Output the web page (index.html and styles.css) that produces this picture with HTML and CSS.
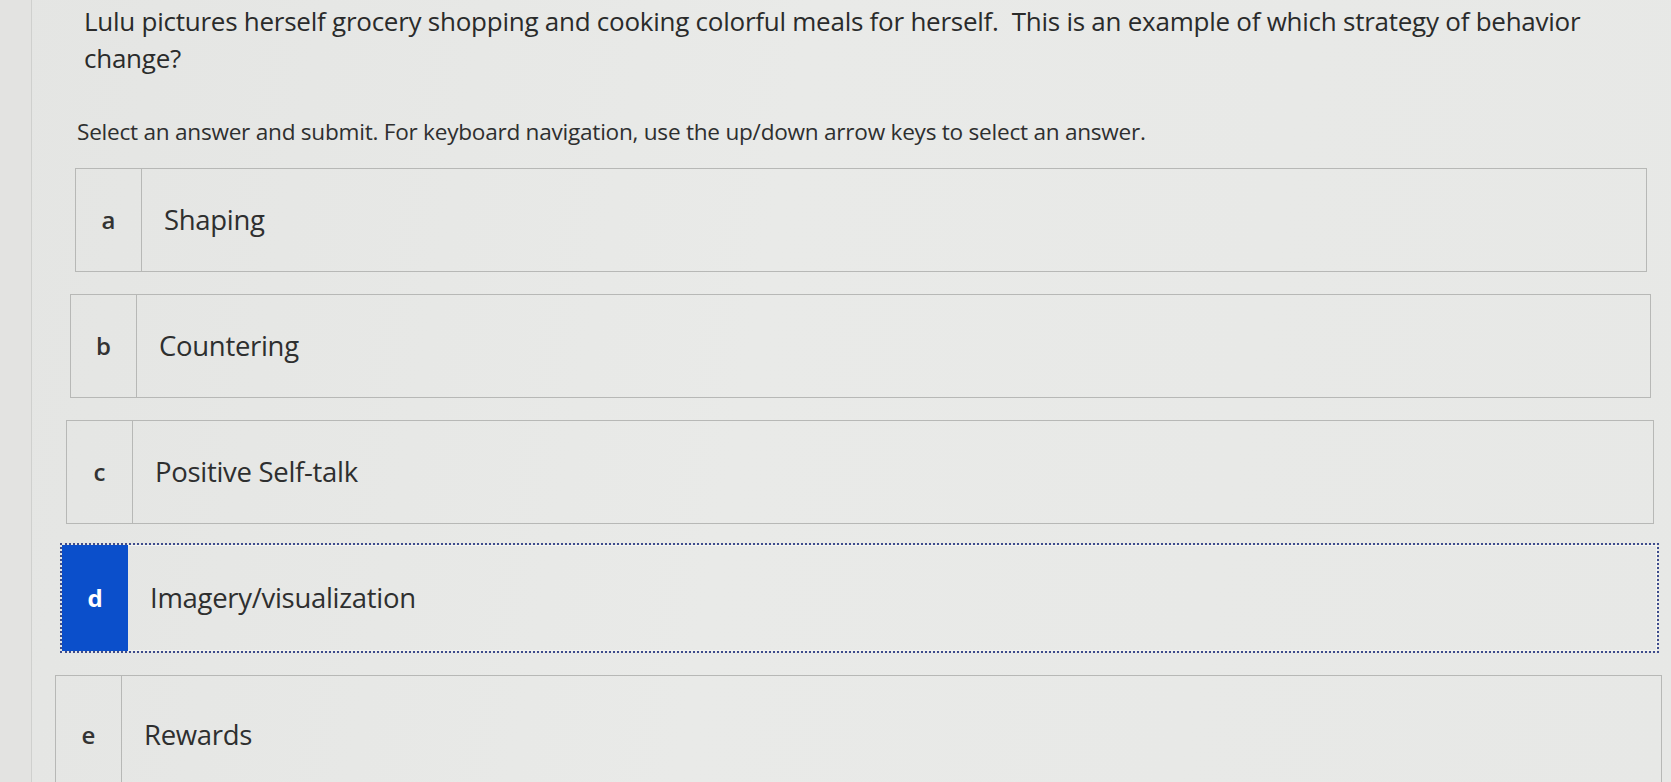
FILE: index.html
```html
<!DOCTYPE html>
<html lang="en">
<head>
<meta charset="utf-8">
<title>Question</title>
<link rel="stylesheet" href="styles.css">
</head>
<body>
<div class="page">
  <div class="edge"></div>
  <main class="main">
    <h1 class="question">Lulu pictures herself grocery shopping and cooking colorful meals for herself.&nbsp; This is an example of which strategy of behavior change?</h1>
    <p class="instructions">Select an answer and submit. For keyboard navigation, use the up/down arrow keys to select an answer.</p>
    <ul class="options">
      <li class="option"><span class="letter">a</span><span class="text">Shaping</span></li>
      <li class="option"><span class="letter">b</span><span class="text">Countering</span></li>
      <li class="option"><span class="letter">c</span><span class="text">Positive Self-talk</span></li>
      <li class="option selected"><span class="letter">d</span><span class="text">Imagery/visualization</span></li>
      <li class="option"><span class="letter">e</span><span class="text">Rewards</span></li>
    </ul>
  </main>
</div>
</body>
</html>
```

FILE: styles.css
```css
* { box-sizing: border-box; }
html, body { margin: 0; padding: 0; height: 100%; }
body {
  background: #e6e7e5;
  font-family: "Open Sans", "Lato", sans-serif;
  color: #2e2f2f;
  overflow: hidden;
}
.page {
  display: flex;
  min-height: 100%;
  background: linear-gradient(100deg, #e4e5e3 0%, #e9eae8 45%, #e7e8e6 100%);
}
.edge {
  width: 32px;
  flex: none;
  background: #e3e3e1;
  border-right: 1px solid #cfd0ce;
}
.main {
  flex: 1;
  padding: 3px 0 0 52px;
}
.question {
  margin: 0;
  font-size: 26px;
  font-weight: 400;
  line-height: 37px;
  max-width: 1540px;
  color: #2a2b2b;
  letter-spacing: -0.25px;
}
.instructions {
  margin: 41px 0 0 -7px;
  font-size: 22.6px;
  line-height: 28px;
  color: #2e2f2f;
  letter-spacing: -0.25px;
}
.options {
  list-style: none;
  margin: 22px 0 0 0;
  padding: 0;
  display: flex;
  flex-direction: column;
  gap: 22px;
}
.option {
  display: flex;
  align-items: stretch;
  height: 104px;
  border: 1.5px solid #b7b8b6;
  font-size: 27.5px;
}
.option:nth-child(1) { margin: 0 24px 0 -9px; }
.option:nth-child(2) { margin: 0 20px 0 -14px; }
.option:nth-child(3) { margin: 0 17px 0 -18px; }
.option:nth-child(4) { margin: -3px 12px 0 -24px; height: 110px; }
.option:nth-child(5) { margin: 0 9px 0 -29px; height: 120px; }
.letter {
  width: 66px;
  flex: none;
  display: flex;
  align-items: center;
  justify-content: center;
  border-right: 1.5px solid #b7b8b6;
  font-size: 24px;
  font-weight: 600;
  color: #333;
  padding-bottom: 2px;
}
.text {
  display: flex;
  align-items: center;
  padding: 0 0 2px 22px;
  color: #2e2f2f;
  letter-spacing: -0.3px;
}
.option.selected {
  border: 2px dotted #3e4c8c;
  box-shadow: inset 0 0 0 1px #f4f5f3;
}
.option.selected .letter {
  background: #0b4fcb;
  color: #ffffff;
  font-weight: 700;
  border-right: none;
}
```
